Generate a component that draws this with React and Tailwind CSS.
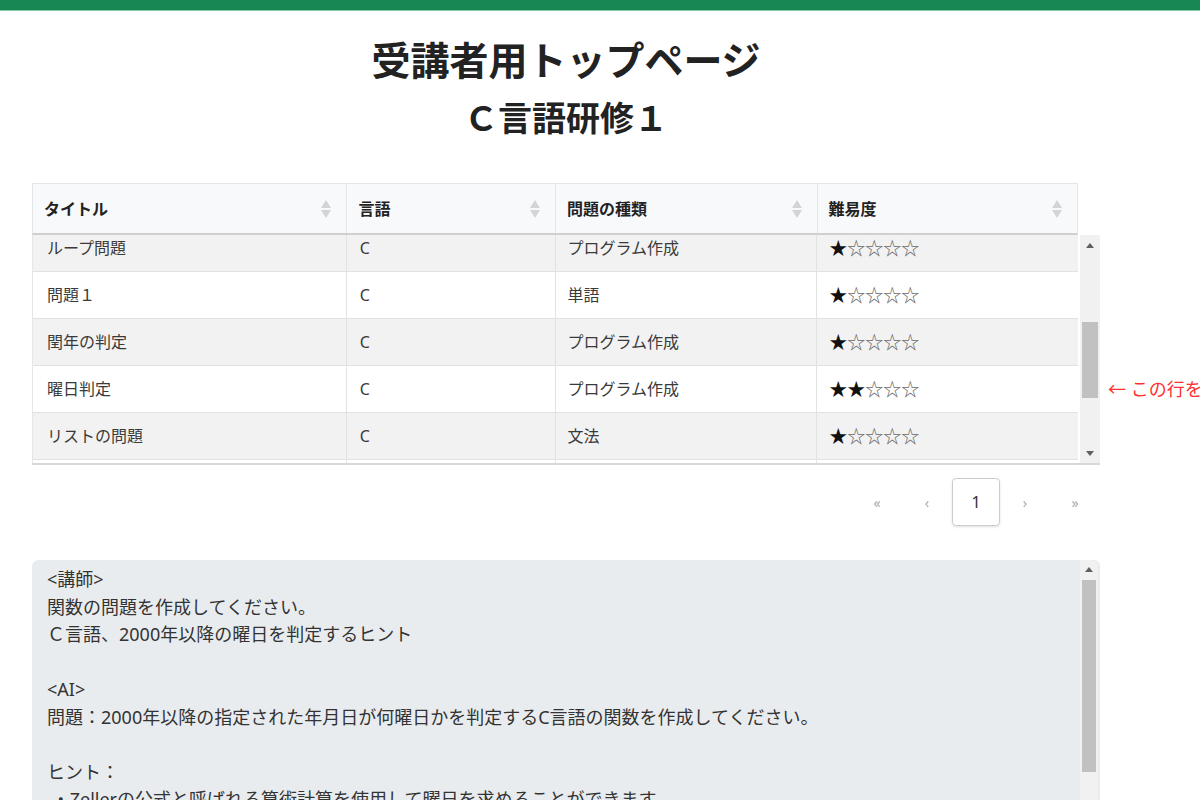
import React from 'react';

const font = { fontFamily: '"Noto Sans", "Noto Sans CJK JP", sans-serif' };

const columns = [
  { label: 'タイトル', w: 'w-[314px]' },
  { label: '言語', w: 'w-[209px]' },
  { label: '問題の種類', w: 'w-[262px]' },
  { label: '難易度', w: 'w-[261px]' },
];

const rows = [
  { title: 'ループ問題', lang: 'C', kind: 'プログラム作成', level: 1 },
  { title: '問題１', lang: 'C', kind: '単語', level: 1 },
  { title: '閏年の判定', lang: 'C', kind: 'プログラム作成', level: 1 },
  { title: '曜日判定', lang: 'C', kind: 'プログラム作成', level: 2 },
  { title: 'リストの問題', lang: 'C', kind: '文法', level: 1 },
  { title: '', lang: '', kind: '', level: 0 },
];

const SortIcon = () => (
  <svg width="12" height="20" viewBox="0 0 12 20" className="shrink-0">
    <path d="M6 1 L11 9 L1 9 Z" fill="#d4d4d4" />
    <path d="M6 19 L11 11 L1 11 Z" fill="#d4d4d4" />
  </svg>
);

const Arrow = ({ up }) => (
  <svg width="8" height="5" viewBox="0 0 8 5">
    <path d={up ? 'M4 0 L8 5 L0 5 Z' : 'M0 0 L8 0 L4 5 Z'} fill="#606060" />
  </svg>
);

const Stars = ({ level }) => {
  if (!level) return null;
  return (
    <span className="text-[18px]">
      <span className="text-[#111]">{'★'.repeat(level)}</span>
      <span className="text-[#666]">{'☆'.repeat(5 - level)}</span>
    </span>
  );
};

const message = `<講師>
関数の問題を作成してください。
Ｃ言語、2000年以降の曜日を判定するヒント

<AI>
問題：2000年以降の指定された年月日が何曜日かを判定するC言語の関数を作成してください。

ヒント：
 ・Zellerの公式と呼ばれる算術計算を使用して曜日を求めることができます。
 ・年、月、日を入力として受け取り、曜日を返す関数を作成してください。`;

const App = () => {
  return (
    <div className="h-[800px] w-[1200px] overflow-hidden bg-white text-[#333]" style={font}>
      <div className="h-[11px] bg-[#198754] border-b border-[#86c7a5]" />

      <div className="ml-[32px] w-[1068px]">
        <h1 className="mt-[25px] text-center text-[39px] leading-[48px] font-bold text-[#222]">
          受講者用トップページ
        </h1>
        <h2 className="mt-[14px] text-center text-[34px] leading-[40px] font-bold text-[#222]">
          Ｃ言語研修１
        </h2>

        {/* table header */}
        <div className="mt-[45px] flex w-[1046px] h-[52px] bg-[#f8f9fa] border border-[#e3e6e8] border-b-2 border-b-[#d0d0d0]">
          {columns.map((c, i) => (
            <div
              key={c.label}
              className={`${c.w} flex items-center justify-between pl-[11px] pr-[14px] text-[16px] font-bold text-[#222] ${i > 0 ? 'border-l border-[#e3e6e8]' : ''}`}
            >
              <span>{c.label}</span>
              <SortIcon />
            </div>
          ))}
        </div>

        {/* table body */}
        <div className="flex">
          <div className="flex w-[1068px] h-[230px] border-b-2 border-[#d8d8d8] shrink-0">
            <div className="w-[1046px] h-[228px] overflow-hidden border-l border-[#e6e6e6]">
              <div className="-mt-[10px]">
                {rows.map((r, i) => (
                  <div
                    key={i}
                    className={`flex h-[47px] border-b border-[#e2e2e2] text-[16px] text-[#3a3a3a] ${i % 2 === 0 ? 'bg-[#f2f2f2]' : 'bg-white'}`}
                  >
                    <div className="w-[313px] flex items-center pl-[14px]">{r.title}</div>
                    <div className="w-[209px] flex items-center pl-[13px] border-l border-[#e2e2e2]">{r.lang}</div>
                    <div className="w-[262px] flex items-center pl-[12px] border-l border-[#e2e2e2]">{r.kind}</div>
                    <div className="w-[262px] flex items-center pl-[12px] border-l border-[#e2e2e2]">
                      <Stars level={r.level} />
                    </div>
                  </div>
                ))}
              </div>
            </div>
            <div className="ml-[2px] w-[20px] h-[228px] bg-[#f1f1f1] flex flex-col items-center">
              <div className="h-[20px] flex items-center justify-center"><Arrow up /></div>
              <div className="mt-[67px] w-[16px] h-[76px] bg-[#c1c1c1]" />
              <div className="flex-1" />
              <div className="h-[20px] flex items-center justify-center"><Arrow /></div>
            </div>
          </div>
          <div className="shrink-0 whitespace-nowrap pl-[8px] pt-[142px] text-[18px] leading-[24px] text-[#ff3030]">
            ← この行を
          </div>
        </div>

        {/* pagination */}
        <div className="mt-[13px] flex justify-end items-center">
          {['«', '‹'].map((s) => (
            <span key={s} className="w-[50px] text-center text-[14px] text-[#aaa]">{s}</span>
          ))}
          <span className="w-[48px] h-[48px] flex items-center justify-center border border-[#ccc] rounded-[4px] shadow-sm text-[16px] text-[#333]">
            1
          </span>
          {['›', '»'].map((s) => (
            <span key={s} className="w-[50px] text-center text-[14px] text-[#aaa]">{s}</span>
          ))}
        </div>

        {/* message box */}
        <div className="mt-[34px] flex h-[300px] bg-[#e9ecef] rounded-[6px]">
          <div className="flex-1 pl-[15px] pt-[6px] whitespace-pre-wrap text-[18px] leading-[27.5px] text-[#333]">
            {message}
          </div>
          <div className="mr-[2px] w-[18px] flex flex-col items-center bg-[#f1f1f1] rounded-tr-[6px]">
            <div className="h-[18px] flex items-center justify-center"><Arrow up /></div>
            <div className="mt-[2px] w-[14px] h-[192px] bg-[#c1c1c1]" />
          </div>
        </div>
      </div>
    </div>
  );
};

export default App;
